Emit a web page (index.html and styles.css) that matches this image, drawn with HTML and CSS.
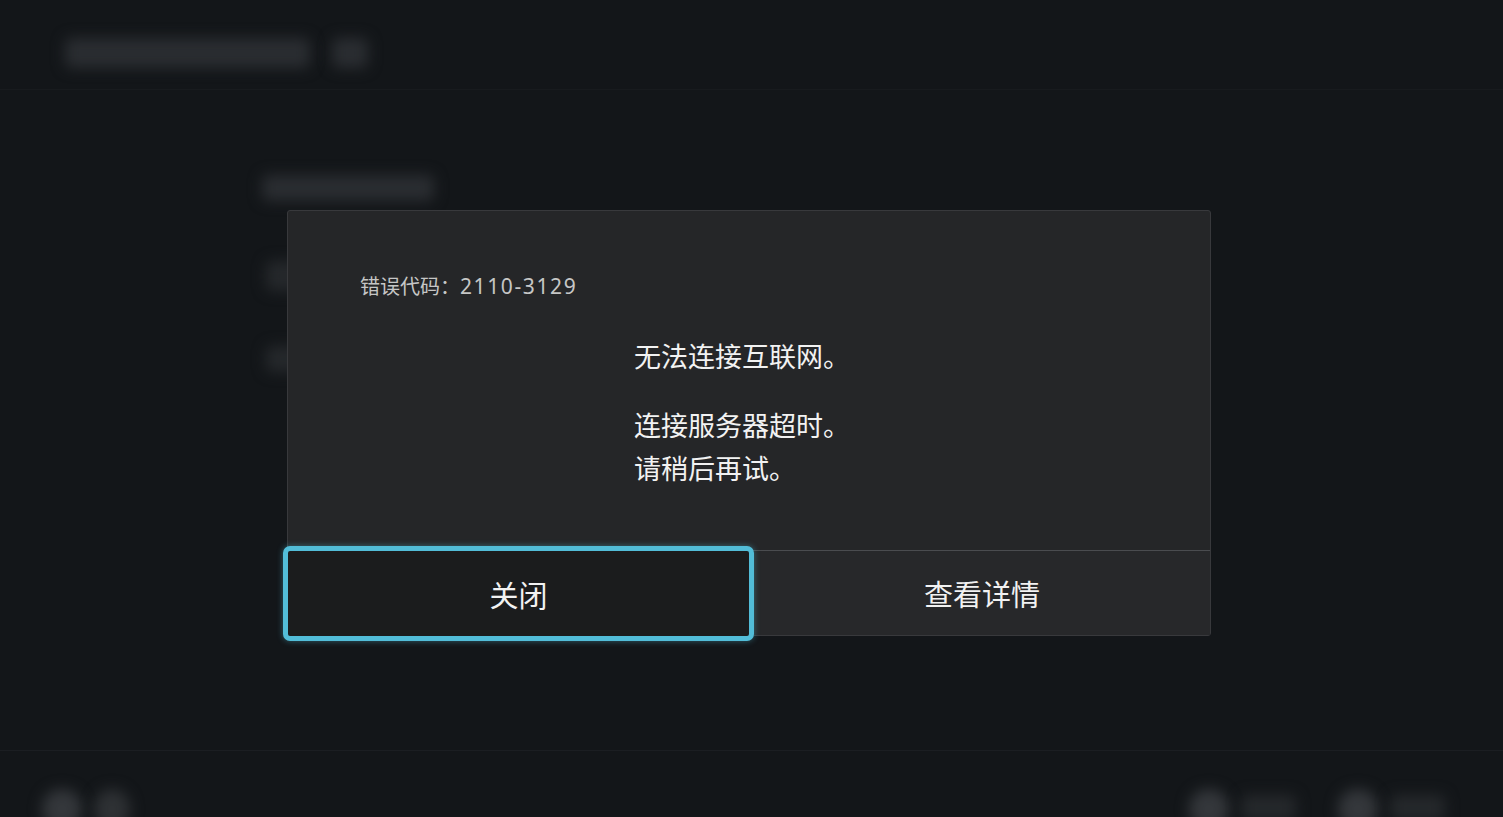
FILE: index.html
```html
<html><head>
<meta charset="utf-8">
<link rel="stylesheet" href="styles.css">
</head>
<body>
<div class="screen">
    <div class="header">
        <div class="blur-bar title-bar"></div>
        <div class="blur-bar title-icon"></div>
    </div>
    <div class="main">
        <div class="blur-bar item-a"></div>
        <div class="blur-bar item-b"></div>
        <div class="blur-bar item-c"></div>
    </div>
    <div class="footer">
        <div class="footer-left">
            <div class="blur-dot"></div>
            <div class="blur-dot small"></div>
        </div>
        <div class="footer-right">
            <div class="blur-dot"></div>
            <div class="blur-bar hint"></div>
            <div class="blur-dot"></div>
            <div class="blur-bar hint"></div>
        </div>
    </div>
</div>

<div class="dialog">
    <div class="dialog-body">
        <div class="error-code">错误代码：<span class="code-num">2110-3129</span></div>
        <div class="message">
            <p>无法连接互联网。</p>
            <p>连接服务器超时。<br>请稍后再试。</p>
        </div>
    </div>
    <div class="dialog-buttons">
        <button class="btn btn-focus">关闭</button>
        <button class="btn">查看详情</button>
    </div>
</div>
</body>
</html>
```
FILE: styles.css
```css
:root {
    --bg: #131619;
    --ghost: #2a2d31;
    --dialog-bg: #252628;
    --dialog-line: #4a4c4f;
    --focus: #52bdd8;
    --text-main: #f2f2f2;
    --text-dim: #c6c6c6;
}

body {
    margin: 0;
    background: var(--bg);
    font-family: "Noto Sans CJK SC", "Noto Sans", sans-serif;
    overflow: hidden;
}

.screen {
    height: 817px;
    display: flex;
    flex-direction: column;
}

.header {
    height: 90px;
    box-sizing: border-box;
    padding: 38px 0 0 65px;
    display: flex;
    gap: 22px;
    border-bottom: 1px solid #181b1e;
}

.blur-bar {
    background: var(--ghost);
    border-radius: 6px;
    filter: blur(7px);
}

.title-bar {
    width: 245px;
    height: 30px;
}

.title-icon {
    width: 36px;
    height: 30px;
}

.main {
    flex: 1;
    padding: 85px 0 0 262px;
    display: flex;
    flex-direction: column;
    align-items: flex-start;
}

.item-a {
    width: 172px;
    height: 26px;
}

.item-b {
    width: 60px;
    height: 30px;
    margin-top: 60px;
    margin-left: 4px;
    background: #25282b;
}

.item-c {
    width: 110px;
    height: 26px;
    margin-top: 55px;
    margin-left: 4px;
    background: #25282b;
}

.footer {
    height: 67px;
    box-sizing: border-box;
    border-top: 1px solid #1b1e22;
    padding: 38px 58px 0 42px;
    display: flex;
    justify-content: space-between;
}

.footer-left,
.footer-right {
    display: flex;
    gap: 12px;
}

.blur-dot {
    width: 40px;
    height: 40px;
    border-radius: 50%;
    background: #34373b;
    filter: blur(7px);
}

.blur-dot.small {
    width: 36px;
    background: #2e3134;
}

.hint {
    width: 55px;
    height: 26px;
    margin-top: 6px;
    background: #25282b;
}

.hint + .blur-dot {
    margin-left: 30px;
}

.dialog {
    position: absolute;
    left: 287px;
    top: 210px;
    width: 924px;
    height: 426px;
    box-sizing: border-box;
    background: var(--dialog-bg);
    border: 1px solid #38393c;
    border-radius: 3px;
    display: flex;
    flex-direction: column;
}

.dialog-body {
    height: 339px;
    box-sizing: border-box;
    padding: 63px 0 0 72px;
}

.error-code {
    color: var(--text-dim);
    font-size: 20px;
    line-height: 24px;
}

.code-num {
    font-family: "Noto Sans", sans-serif;
    font-size: 21px;
    letter-spacing: 1.6px;
}

.message {
    margin: 36px 0 0 274px;
    color: var(--text-main);
    font-size: 27px;
    line-height: 43px;
}

.message p {
    margin: 0 0 26px;
}

.dialog-buttons {
    flex: 1;
    display: flex;
    border-top: 1px solid var(--dialog-line);
}

.btn {
    font-family: inherit;
    font-size: 29px;
    color: var(--text-main);
    border: none;
    background: #27282a;
    flex: 1;
    padding: 0;
}

.btn-focus {
    flex: none;
    width: 471px;
    margin: -5px 0 -6px -5px;
    background: #1b1c1d;
    border: 5px solid var(--focus);
    border-radius: 7px;
    box-shadow: 0 0 6px rgba(82, 189, 216, 0.45);
    position: relative;
}
```
